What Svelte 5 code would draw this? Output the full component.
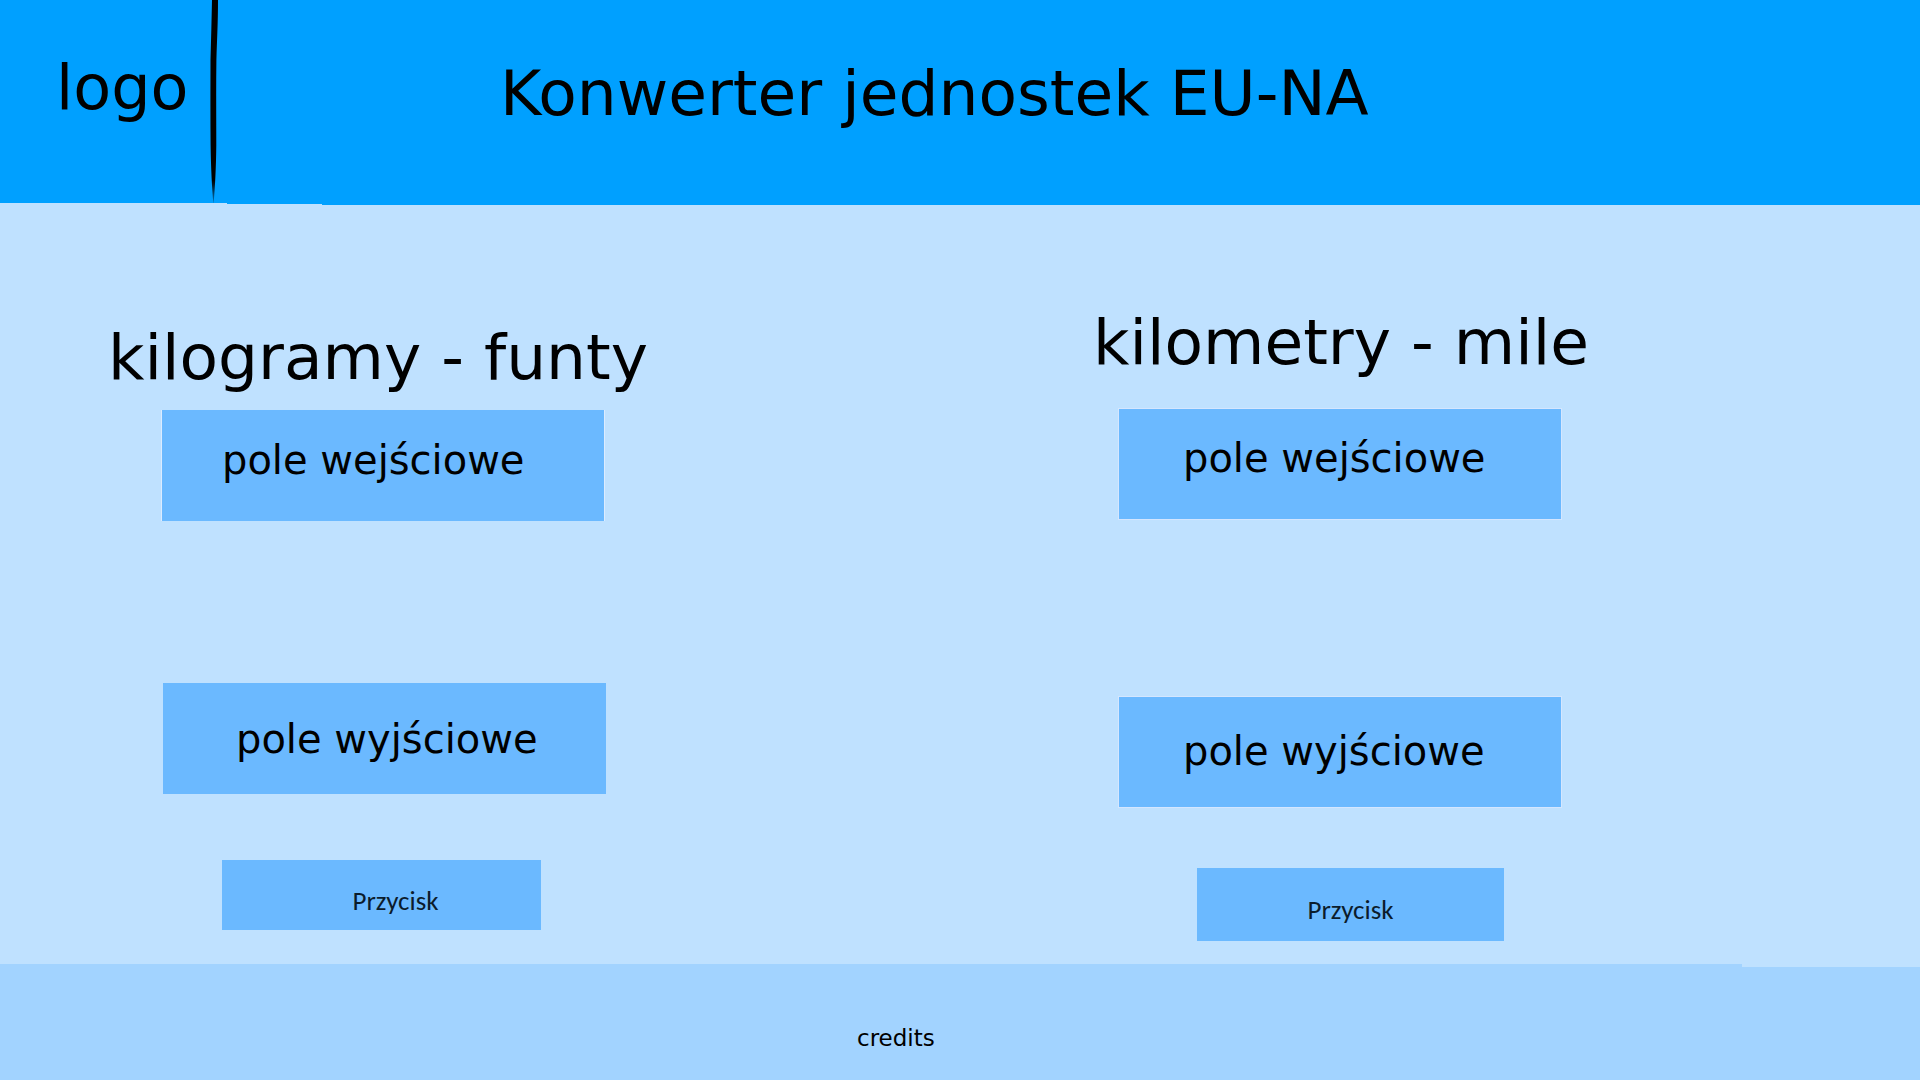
<script>
  let kilograms = $state('');
  let pounds = $state('');
  let kilometres = $state('');
  let miles = $state('');

  function convert(value, factor) {
    const number = parseFloat(value.replace(',', '.'));
    return Number.isNaN(number) ? '' : (number * factor).toFixed(2);
  }
</script>

<div class="page">
  <header>
    <div class="brand">
      <span class="logo">logo</span>
      <svg class="divider" viewBox="0 0 12 205" aria-hidden="true">
        <defs>
          <linearGradient id="fade" x1="0" y1="0" x2="0" y2="1">
            <stop offset="0.88" stop-color="#000" />
            <stop offset="1" stop-color="#000" stop-opacity="0.2" />
          </linearGradient>
        </defs>
        <path fill="url(#fade)" d="M4 0H10C10 22 9 40 8.400 60C8 90 8.300 120 8.300 145C8 170 7 188 5.500 205C4 188 3 170 2.600 145C2.300 115 2.500 85 2.500 60C3 40 3.700 20 4 0Z" />
      </svg>
    </div>
    <h1>Konwerter jednostek EU-NA</h1>
  </header>

  <main>
    <form class="mass" onsubmit={(e) => { e.preventDefault(); pounds = convert(kilograms, 2.20462); }}>
      <h2>kilogramy - funty</h2>
      <input class="source" aria-label="kilogramy" placeholder="pole wejściowe" bind:value={kilograms} />
      <input class="result" aria-label="funty" placeholder="pole wyjściowe" readonly value={pounds} />
      <button type="submit">Przycisk</button>
    </form>

    <form class="distance" onsubmit={(e) => { e.preventDefault(); miles = convert(kilometres, 0.621371); }}>
      <h2>kilometry - mile</h2>
      <input class="source" aria-label="kilometry" placeholder="pole wejściowe" bind:value={kilometres} />
      <input class="result" aria-label="mile" placeholder="pole wyjściowe" readonly value={miles} />
      <button type="submit">Przycisk</button>
    </form>
  </main>

  <footer>credits</footer>
</div>

<style>
  :global(body) {
    margin: 0;
    background: #bfe1ff;
  }

  .page {
    display: flex;
    flex-direction: column;
    min-height: 100vh;
    color: #000;
    font-family: Verdana, "DejaVu Sans", sans-serif;
  }

  header {
    display: flex;
    height: 205px;
    background: #00a0ff;
    clip-path: polygon(0 0, 100% 0, 100% 100%, 322px 100%, 322px 204px, 227px 204px, 227px 203px, 0 203px);
  }

  .brand {
    display: flex;
    justify-content: space-between;
    width: 220px;
    padding-left: 56px;
    box-sizing: border-box;
  }

  .logo,
  h1,
  h2 {
    margin: 0;
    font-size: 63px;
    font-weight: 400;
    line-height: 72px;
    white-space: nowrap;
  }

  .logo {
    padding-top: 52px;
    font-size: 62px;
  }

  .divider {
    flex: none;
    width: 12px;
    height: 205px;
  }

  h1 {
    padding: 58px 0 0 280px;
  }

  main {
    flex: 1;
    display: grid;
    grid-template-columns: 1fr 1fr;
  }

  form {
    display: flex;
    flex-direction: column;
    align-items: flex-start;
    padding-bottom: 23px;
  }

  input {
    width: 442px;
    max-width: 100%;
    box-sizing: border-box;
    border: 0;
    border-radius: 0;
    outline: 0;
    background: #6bb9ff;
    color: #000;
    font: 40px/48px Verdana, "DejaVu Sans", sans-serif;
  }

  input::placeholder {
    color: #000;
    opacity: 1;
  }

  button {
    border: 0;
    border-radius: 0;
    background: #6bb9ff;
    color: #0b1c2c;
    font: 27px/32px Calibri, Carlito, Lato, sans-serif;
    cursor: pointer;
  }

  .mass {
    padding-top: 117px;
  }

  .mass h2 {
    margin: 0 0 16px 108px;
  }

  .mass .source {
    height: 111px;
    margin-left: 162px;
    padding: 26px 0 37px 60px;
    box-shadow: -1px 0 #dcecff, 1px 0 #dcecff;
  }

  .mass .result {
    width: 443px;
    height: 111px;
    margin: 162px 0 66px 163px;
    padding: 32px 0 31px 73px;
  }

  .mass button {
    width: 319px;
    height: 70px;
    margin-left: 222px;
    padding: 12px 0 0 28px;
  }

  .distance {
    padding-top: 102px;
  }

  .distance h2 {
    margin: 0 0 30px 133px;
  }

  .distance input {
    height: 110px;
    margin-left: 159px;
    padding: 25px 0 37px 64px;
    box-shadow: 0 0 0 1px #d4e6ff;
  }

  .distance .result {
    margin-top: 178px;
    margin-bottom: 61px;
    padding: 30px 0 32px 64px;
  }

  .distance button {
    width: 307px;
    height: 73px;
    margin-left: 237px;
    padding: 11px 0 0;
  }

  footer {
    height: 116px;
    padding: 60px 0 0 857px;
    box-sizing: border-box;
    background: #a2d3ff;
    font-size: 23px;
    line-height: 28px;
    clip-path: polygon(0 0, 90.73% 0, 90.73% 3px, 100% 3px, 100% 100%, 0 100%);
  }
</style>
